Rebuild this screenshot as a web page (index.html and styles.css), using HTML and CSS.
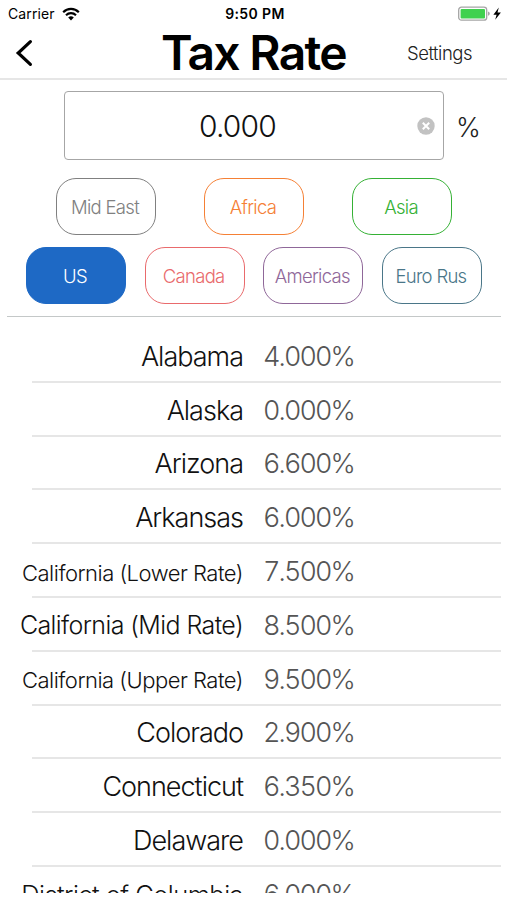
FILE: index.html
```html
<!DOCTYPE html>
<html lang="en">
<head>
    <meta charset="UTF-8">
    <meta name="viewport" content="width=device-width, initial-scale=1.0">
    <title>Tax Rate</title>
    <link rel="stylesheet" href="styles.css">
</head>
<body>
    <div class="status-bar">
        <div class="status-left">
            <span class="carrier">Carrier</span>
            <svg class="wifi" width="18" height="14" viewBox="0 0 18 14">
                <path d="M1.2 5.2 A11 11 0 0 1 16.8 5.2" fill="none" stroke="#000" stroke-width="2.2"/>
                <path d="M4 8.2 A7.1 7.1 0 0 1 14 8.2" fill="none" stroke="#000" stroke-width="2.1"/>
                <path d="M9 13.4 L6.2 10.6 A4 4 0 0 1 11.8 10.6 Z" fill="#000"/>
            </svg>
        </div>
        <div class="clock">9:50 PM</div>
        <div class="status-right">
            <svg width="44" height="16" viewBox="0 0 44 16">
                <rect x="0.7" y="1.2" width="28" height="13" rx="2.8" fill="#fff" stroke="#a5a5a5" stroke-width="1.3"/>
                <rect x="2.6" y="3" width="24.4" height="9.4" rx="1" fill="#3fd14f"/>
                <path d="M30 5.6 Q31.8 6 31.8 7.7 Q31.8 9.4 30 9.8 Z" fill="#a5a5a5"/>
                <path d="M40.8 1.6 L35.4 8.8 H38.6 L37.2 13.8 L42.9 6.6 H39.5 Z" fill="#000"/>
            </svg>
        </div>
    </div>

    <div class="nav">
        <svg class="back" width="18" height="28" viewBox="0 0 18 28">
            <path d="M15.4 2.6 L3.2 14 L15.4 25.4" fill="none" stroke="#000" stroke-width="3.2" stroke-linecap="round"/>
        </svg>
        <h1>Tax Rate</h1>
        <a class="settings">Settings</a>
    </div>

    <div class="rate-entry">
        <div class="rate-box">
            <span class="rate-value">0.000</span>
            <svg class="clear" width="18" height="18" viewBox="0 0 18 18">
                <circle cx="9" cy="9" r="8.7" fill="#c2c2c2"/>
                <path d="M5.8 5.8 L12.2 12.2 M12.2 5.8 L5.8 12.2" stroke="#fff" stroke-width="2"/>
            </svg>
        </div>
        <span class="percent">%</span>
    </div>

    <div class="regions top">
        <button class="mideast">Mid East</button>
        <button class="africa">Africa</button>
        <button class="asia">Asia</button>
    </div>
    <div class="regions">
        <button class="us">US</button>
        <button class="canada">Canada</button>
        <button class="americas">Americas</button>
        <button class="euro">Euro Rus</button>
    </div>

    <div class="list">
        <div class="row"><span class="name">Alabama</span><span class="rate">4.000%</span></div>
        <div class="row"><span class="name">Alaska</span><span class="rate">0.000%</span></div>
        <div class="row"><span class="name">Arizona</span><span class="rate">6.600%</span></div>
        <div class="row"><span class="name">Arkansas</span><span class="rate">6.000%</span></div>
        <div class="row"><span class="name small">California (Lower Rate)</span><span class="rate">7.500%</span></div>
        <div class="row"><span class="name medium">California (Mid Rate)</span><span class="rate">8.500%</span></div>
        <div class="row"><span class="name small">California (Upper Rate)</span><span class="rate">9.500%</span></div>
        <div class="row"><span class="name">Colorado</span><span class="rate">2.900%</span></div>
        <div class="row"><span class="name">Connecticut</span><span class="rate">6.350%</span></div>
        <div class="row"><span class="name">Delaware</span><span class="rate">0.000%</span></div>
        <div class="row"><span class="name wide">District of Columbia</span><span class="rate">6.000%</span></div>
    </div>
</body>
</html>
```

FILE: styles.css
```css
* {
    box-sizing: border-box;
}
body {
    margin: 0;
    width: 507px;
    height: 900px;
    overflow: hidden;
    background: #fff;
    color: #111;
    font-family: Inter, "Liberation Sans", sans-serif;
    font-weight: 300;
}

/* status bar */
.status-bar {
    display: grid;
    grid-template-columns: 1fr auto 1fr;
    align-items: center;
    height: 27px;
    padding: 0 5px 0 8px;
    color: #000;
}
.status-left {
    display: flex;
    align-items: center;
    gap: 7px;
}
.carrier {
    font-size: 14px;
    font-weight: 400;
    letter-spacing: 0.1px;
}
.clock {
    font-size: 14px;
    font-weight: 600;
    letter-spacing: 0.4px;
}
.status-right {
    display: flex;
    justify-content: flex-end;
}

/* nav bar */
.nav {
    display: grid;
    grid-template-columns: 1fr auto 1fr;
    align-items: center;
    height: 53px;
    padding: 0 15px;
    border-bottom: 2px solid #e6e6e6;
}
h1 {
    margin: 0;
    font-size: 48px;
    font-weight: 600;
    letter-spacing: -1.7px;
    line-height: 51px;
    color: #000;
}
.settings {
    justify-self: end;
    margin-right: 20px;
    font-size: 18.5px;
    letter-spacing: -0.5px;
    color: #222;
}

/* rate field */
.rate-entry {
    display: flex;
    align-items: center;
    padding: 11px 0 0 64px;
    height: 80px;
}
.rate-box {
    display: flex;
    align-items: center;
    width: 380px;
    height: 69px;
    padding: 0 8px 0 0;
    border: 1px solid #a6a6a6;
    border-radius: 4px;
}
.rate-value {
    flex: 1;
    padding: 1px 7px 0 0;
    text-align: center;
    font-size: 30px;
    letter-spacing: -0.8px;
}
.percent {
    margin: 2px 0 0 12px;
    font-size: 26.5px;
    color: #222;
}

/* region buttons */
.regions {
    display: flex;
    justify-content: space-between;
    width: 456px;
    margin: 12px 0 0 26px;
}
.regions.top {
    width: 396px;
    margin: 18px 0 0 56px;
}
button {
    width: 100px;
    height: 57px;
    padding: 1px 2px 0 0;
    border: 1.5px solid;
    border-radius: 20px;
    background: #fff;
    font-family: inherit;
    font-size: 18.5px;
    font-weight: 300;
    letter-spacing: -0.7px;
}
.mideast {
    color: #808080;
}
.africa {
    color: #f58035;
}
.asia {
    color: #35b135;
}
.us {
    background: #1e69c5;
    border-color: #1e69c5;
    color: #fff;
}
.canada {
    color: #e96a6c;
}
.americas {
    color: #8f6799;
}
.euro {
    color: #4a7688;
}

/* state list */
.list {
    height: 577px;
    margin: 12px 6px 0 7px;
    padding-top: 12px;
    border-top: 1px solid #c4c8c8;
    overflow: hidden;
}
.row {
    display: grid;
    grid-template-columns: 211px 1fr;
    column-gap: 20px;
    align-items: center;
    height: 53.8px;
    margin-left: 25px;
    padding-top: 3px;
    border-bottom: 2px solid #e6e6e6;
    white-space: nowrap;
}
.name {
    justify-self: end;
    font-size: 27px;
    letter-spacing: -1px;
}
.name.medium {
    font-size: 25px;
    letter-spacing: -0.6px;
}
.name.wide {
    font-size: 25.5px;
    letter-spacing: -0.55px;
}
.name.small {
    padding-top: 2px;
    font-size: 22px;
    letter-spacing: -0.5px;
}
.rate {
    font-size: 27px;
    font-variant-numeric: tabular-nums;
    letter-spacing: -1.9px;
    color: #555;
}
```
